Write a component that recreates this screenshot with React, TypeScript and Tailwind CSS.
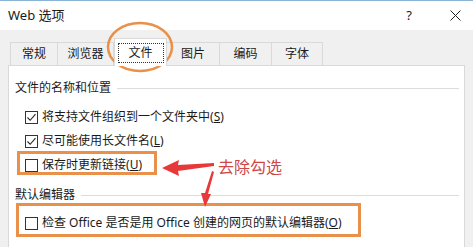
import React from "react";

const tabs = [
  { label: "常规", w: "w-[48px]" },
  { label: "浏览器", w: "w-[57px]" },
  { label: "文件", w: "w-[53px]", active: true },
  { label: "图片", w: "w-[54px]" },
  { label: "编码", w: "w-[53px]" },
  { label: "字体", w: "w-[52px]" },
];

function Check({ checked }: { checked?: boolean }) {
  return (
    <span className="flex h-[13px] w-[13px] shrink-0 items-center justify-center border border-[#333333] bg-white">
      {checked && (
        <svg width="11" height="11" viewBox="0 0 11 11">
          <path d="M1.5 5.5 L4.2 8.3 L9.5 2.2" fill="none" stroke="#222" strokeWidth="1.1" />
        </svg>
      )}
    </span>
  );
}

function Header({ text, className }: { text: string; className?: string }) {
  return (
    <div className={"flex h-[16px] items-center pl-[6px] pr-[5px] text-[12px] leading-[16px] " + (className ?? "")}>
      <span>{text}</span>
      <span className="ml-[6px] h-px flex-1 bg-[#dcdcdc]" />
    </div>
  );
}

function Row({
  checked,
  text,
  keyChar,
  className,
  children,
}: {
  checked?: boolean;
  text: string;
  keyChar: string;
  className?: string;
  children?: React.ReactNode;
}) {
  return (
    <div className={"relative flex h-[24px] items-center pl-[16px] text-[12px] " + (className ?? "")}>
      <Check checked={checked} />
      <span className="ml-[4px] whitespace-nowrap">
        {text}(<span className="underline">{keyChar}</span>)
      </span>
      {children}
    </div>
  );
}

export default function App() {
  return (
    <div className="relative h-[247px] w-[473px] overflow-hidden bg-[#f0f0f0] font-['Noto_Sans','Noto_Sans_CJK_SC',sans-serif] text-[#1a1a1a]">
      <div className="flex h-[30px] items-center border-t border-[#8ab4d6] bg-white">
        <span className="pl-[8px] text-[13px]">Web 选项</span>
        <span className="ml-auto mr-[38px] text-[13px]">?</span>
        <svg className="mr-[12px]" width="11" height="11" viewBox="0 0 11 11">
          <path d="M0.5 0.5 L10.5 10.5 M10.5 0.5 L0.5 10.5" stroke="#222" strokeWidth="1" />
        </svg>
      </div>

      <div className="flex h-[35px] items-end pl-[10px]">
        {tabs.map((t) =>
          t.active ? (
            <div
              key={t.label}
              className={`relative z-10 -mb-px flex h-[28px] items-center justify-center border border-b-0 border-[#d9d9d9] bg-white text-[12px] ${t.w}`}
            >
              <span className="flex h-[20px] w-[46px] items-center justify-center border border-dotted border-[#333]">
                {t.label}
              </span>
            </div>
          ) : (
            <div
              key={t.label}
              className={`-ml-px flex h-[23px] items-center justify-center border border-b-0 border-[#d9d9d9] text-[12px] first:ml-0 ${t.w}`}
            >
              {t.label}
            </div>
          )
        )}
      </div>

      <div className="mx-[8px] h-[200px] border border-[#d9d9d9] bg-white pt-[14px]">
        <Header text="文件的名称和位置" />
        <Row className="mt-[9px]" checked text="将支持文件组织到一个文件夹中" keyChar="S" />
        <Row checked text="尽可能使用长文件名" keyChar="L" />
        <Row text="保存时更新链接" keyChar="U">
          <span className="absolute left-[8px] top-[-2px] h-[24px] w-[140px] border-[3px] border-[#e9914a]" />
        </Row>
        <Header className="mt-[10px]" text="默认编辑器" />
        <Row className="mt-[8px]" text="检查 Office 是否是用 Office 创建的网页的默认编辑器" keyChar="O">
          <span className="absolute left-[7px] top-[-8px] h-[34px] w-[345px] border-[3px] border-[#e9914a]" />
        </Row>
      </div>

      <svg className="pointer-events-none absolute left-0 top-0" width="473" height="247">
        <ellipse cx="140" cy="47" rx="32" ry="24" fill="none" stroke="#e9914a" strokeWidth="2.5" />
        <polygon points="162,168 179,160 178,165 214,163 214,166 178,171 179,176" fill="#e8393a" />
        <polygon points="212,171 214,172 208,194 211,194 205,207 201,193 205,193" fill="#e8393a" />
      </svg>
      <div className="absolute left-[218px] top-[157px] text-[16px] leading-[20px] text-[#d04545]">去除勾选</div>
    </div>
  );
}
